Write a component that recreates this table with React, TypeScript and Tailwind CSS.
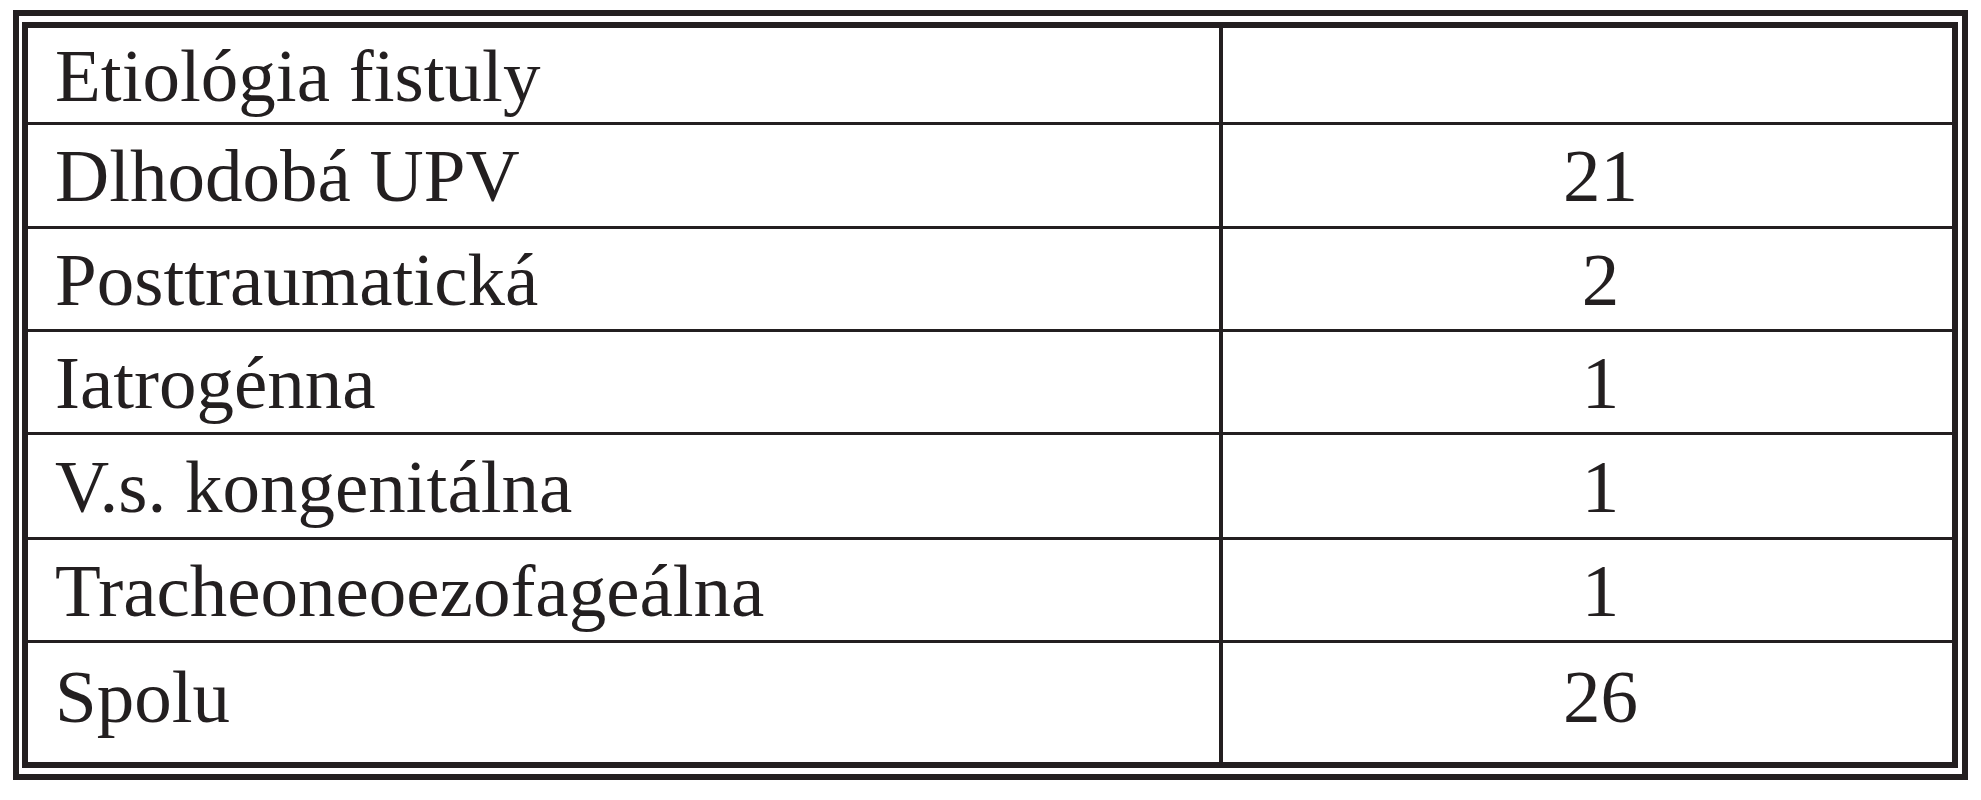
import React from 'react';

// heights include the 3px bottom rule (border-box)
const rows: { label: string; value: string; h: string; pad: string }[] = [
  { label: 'Etiológia fistuly', value: '', h: 'h-[97px]', pad: '' },
  { label: 'Dlhodobá UPV', value: '21', h: 'h-[104px]', pad: '' },
  { label: 'Posttraumatická', value: '2', h: 'h-[103px]', pad: '' },
  { label: 'Iatrogénna', value: '1', h: 'h-[103px]', pad: '' },
  { label: 'V.s. kongenitálna', value: '1', h: 'h-[105px]', pad: '' },
  { label: 'Tracheoneoezofageálna', value: '1', h: 'h-[103px]', pad: '' },
  { label: 'Spolu', value: '26', h: 'h-[119px]', pad: 'pb-[12px]' },
];

export default function App() {
  return (
    <div className="w-[1981px] h-[800px] bg-white pt-[10px] pl-[13px]" style={{ fontFamily: '"Liberation Serif", "Times New Roman", serif' }}>
      <div className="w-[1955px] border-[6px] border-[#231f20] pt-[6px] pl-[3px] pr-[4px] pb-[6px]">
        <div className="border-[6px] border-[#231f20] flex flex-col text-[#231f20] text-[75px] leading-none">
          {rows.map((r, i) => (
            <div key={r.label} className={`flex ${r.h} ${i < rows.length - 1 ? 'border-b-[3px] border-[#231f20]' : ''}`}>
              <div className={`w-[1195px] shrink-0 border-r-[4px] border-[#231f20] flex items-center pl-[27px] ${r.pad}`}>{r.label}</div>
              <div className={`flex-1 flex items-center justify-center pl-[26px] ${r.pad}`}>{r.value}</div>
            </div>
          ))}
        </div>
      </div>
    </div>
  );
}
